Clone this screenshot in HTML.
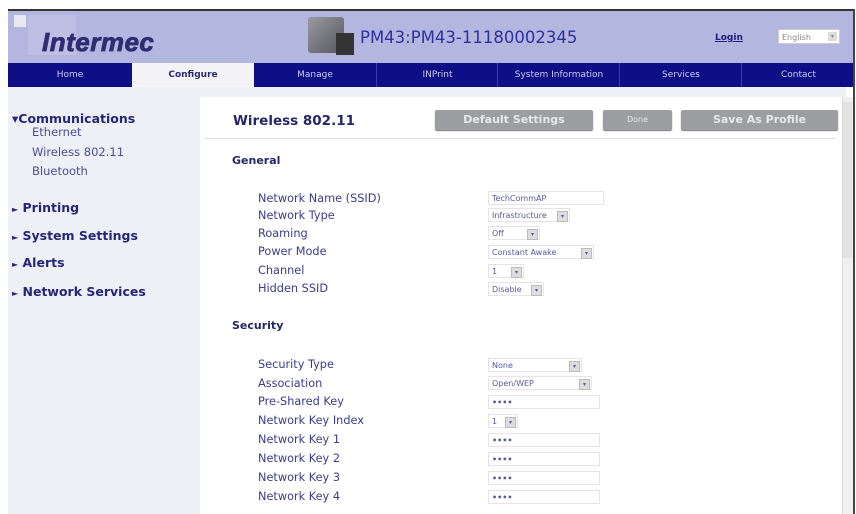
<!DOCTYPE html>
<html><head><style>
body{margin:0;width:856px;height:514px;overflow:hidden;background:#fff;font-family:"DejaVu Sans","Liberation Sans",sans-serif;position:relative}
.a{position:absolute}
.hdr{left:8px;top:9px;width:846px;height:54px;background:#b3b6df;border-top:2px solid #333}
.nav{left:8px;top:63px;width:846px;height:24px;background:#0e0f87}
.tab{position:absolute;top:0;height:24px;line-height:24px;text-align:center;color:#c9cbef;font-size:9px;border-left:1px solid #3a3ca8}
.side{left:8px;top:87px;width:192px;height:427px;background:#eef0f6}
.gap{left:200px;top:87px;width:646px;height:10px;background:#eef0f6}
.sn{position:absolute;left:4px;color:#24267a;font-size:12.5px;font-weight:bold}
.ss{position:absolute;left:4px;color:#4a4c9a;font-size:11.5px}
.lb{position:absolute;left:258px;color:#3a3c8a;font-size:11.3px}
.in{position:absolute;left:488px;height:14px;border:1px solid #e4e4ea;background:#fff;font-size:8px;color:#555a9a;line-height:14px;padding-left:3px;box-sizing:border-box}
.dd{position:absolute;top:2px;width:9px;height:9px;background:#ddd;border:1px solid #bbb;font-size:6px;line-height:9px;text-align:center}
.btn{position:absolute;top:110px;height:20px;background:#9c9ea2;border-radius:2px;color:#e8e8ea;font-weight:bold;font-size:11px;text-align:center;line-height:20px;box-shadow:0 1px 1px #777}
</style></head><body>
<div class="a hdr">
 <div class="a" style="left:6px;top:4px;width:12px;height:12px;background:#e8e8f2"></div>
 <div class="a" style="left:20px;top:4px;width:48px;height:40px;background:#bdc0e4"></div>
 <div class="a" style="left:34px;top:16px;font-family:'Liberation Sans',sans-serif;font-style:italic;font-weight:900;font-size:26px;color:#2e2c72;letter-spacing:0.5px;-webkit-text-stroke:0.8px #2e2c72">Intermec</div>
 <div class="a" style="left:300px;top:6px;width:36px;height:36px;background:linear-gradient(135deg,#9a9aa0,#55575e);border-radius:3px"></div>
 <div class="a" style="left:328px;top:22px;width:18px;height:22px;background:#333"></div>
 <div class="a" style="left:352px;top:17px;font-size:16.5px;color:#2e30a0">PM43:PM43-11180002345</div>
 <div class="a" style="left:707px;top:22px;font-size:9px;color:#1c1e78;text-decoration:underline;font-weight:bold">Login</div>
 <div class="a" style="left:770px;top:18px;width:62px;height:15px;background:#fff;border:1px solid #ccc;font-size:8px;color:#888;line-height:15px;padding-left:3px;box-sizing:border-box">English<span style="position:absolute;right:2px;top:2px;width:9px;height:9px;background:#ddd;font-size:6px;text-align:center;line-height:9px">▾</span></div>
</div>
<div class="a nav">
 <div class="tab" style="left:0;width:124px;border:none">Home</div>
 <div class="tab" style="left:124px;width:122px;background:#f4f4f8;color:#2a2c70;font-weight:bold;border:none">Configure</div>
 <div class="tab" style="left:246px;width:122px;border:none">Manage</div>
 <div class="tab" style="left:368px;width:121px">INPrint</div>
 <div class="tab" style="left:489px;width:122px">System Information</div>
 <div class="tab" style="left:611px;width:122px">Services</div>
 <div class="tab" style="left:733px;width:113px">Contact</div>
</div>
<div class="a side">
 <div class="sn" style="top:24px">▾Communications</div>
 <div class="ss" style="left:24px;top:38px">Ethernet</div>
 <div class="ss" style="left:24px;top:58px">Wireless 802.11</div>
 <div class="ss" style="left:24px;top:77px">Bluetooth</div>
 <div class="sn" style="top:113px"><span style="font-size:8px">►</span> Printing</div>
 <div class="sn" style="top:141px"><span style="font-size:8px">►</span> System Settings</div>
 <div class="sn" style="top:168px"><span style="font-size:8px">►</span> Alerts</div>
 <div class="sn" style="top:197px"><span style="font-size:8px">►</span> Network Services</div>
</div>
<div class="a gap"></div>
<div class="a" style="left:842px;top:97px;width:10px;height:417px;background:#f0f0f0;border-left:1px solid #ddd"></div>
<div class="a" style="left:843px;top:102px;width:9px;height:156px;background:#e2e2e4"></div>
<div class="a" style="left:853px;top:9px;width:2px;height:505px;background:#444"></div>
<div class="a" style="left:233px;top:113px;font-size:13.5px;font-weight:bold;color:#24266a">Wireless 802.11</div>
<div class="btn" style="left:435px;width:158px">Default Settings</div>
<div class="btn" style="left:603px;width:69px;font-weight:normal;font-size:8px">Done</div>
<div class="btn" style="left:681px;width:157px">Save As Profile</div>
<div class="a" style="left:205px;top:138px;width:630px;height:1px;background:#ddd"></div>
<div class="a" style="left:232px;top:154px;font-size:11px;font-weight:bold;color:#24266a">General</div>
<div class="lb" style="top:192px">Network Name (SSID)</div>
<div class="lb" style="top:209px">Network Type</div>
<div class="lb" style="top:227px">Roaming</div>
<div class="lb" style="top:245px">Power Mode</div>
<div class="lb" style="top:264px">Channel</div>
<div class="lb" style="top:282px">Hidden SSID</div>
<div class="in" style="top:191px;width:116px">TechCommAP</div>
<div class="in" style="top:208px;width:82px">Infrastructure<span class="dd" style="left:68px">▾</span></div>
<div class="in" style="top:226px;width:52px">Off<span class="dd" style="left:38px">▾</span></div>
<div class="in" style="top:245px;width:106px">Constant Awake<span class="dd" style="left:92px">▾</span></div>
<div class="in" style="top:264px;width:36px">1<span class="dd" style="left:22px">▾</span></div>
<div class="in" style="top:282px;width:56px">Disable<span class="dd" style="left:42px">▾</span></div>
<div class="a" style="left:232px;top:319px;font-size:11px;font-weight:bold;color:#24266a">Security</div>
<div class="lb" style="top:358px">Security Type</div>
<div class="lb" style="top:377px">Association</div>
<div class="lb" style="top:395px">Pre-Shared Key</div>
<div class="lb" style="top:414px">Network Key Index</div>
<div class="lb" style="top:433px">Network Key 1</div>
<div class="lb" style="top:452px">Network Key 2</div>
<div class="lb" style="top:471px">Network Key 3</div>
<div class="lb" style="top:490px">Network Key 4</div>
<div class="in" style="top:358px;width:94px">None<span class="dd" style="left:80px">▾</span></div>
<div class="in" style="top:376px;width:104px">Open/WEP<span class="dd" style="left:90px">▾</span></div>
<div class="in" style="top:395px;width:112px;font-weight:bold">••••</div>
<div class="in" style="top:414px;width:30px">1<span class="dd" style="left:16px">▾</span></div>
<div class="in" style="top:433px;width:112px;font-weight:bold">••••</div>
<div class="in" style="top:452px;width:112px;font-weight:bold">••••</div>
<div class="in" style="top:471px;width:112px;font-weight:bold">••••</div>
<div class="in" style="top:490px;width:112px;font-weight:bold">••••</div>
</body></html>
